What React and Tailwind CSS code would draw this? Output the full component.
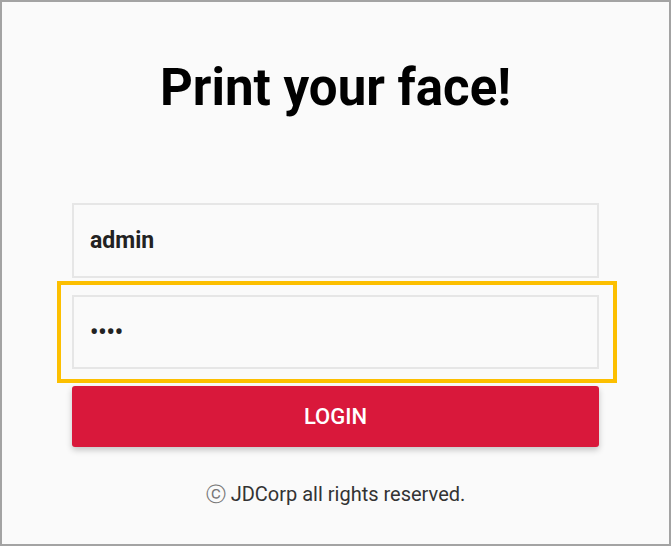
export default function App() {
  return (
    <div
      className="box-border h-[546px] w-[671px] border-2 border-[#a3a3a3] bg-[#fafafa]"
      style={{ fontFamily: "Roboto, 'Liberation Sans', sans-serif" }}
    >
      <h1 className="pt-[52px] text-center text-[51px] font-bold leading-[68px] text-black">
        Print your face!
      </h1>
      <div className="mx-[70px] mt-[81px] flex flex-col">
        <input
          type="text"
          defaultValue="admin"
          className="box-border h-[75px] w-full border-2 border-[#e6e6e6] bg-[#fafafa] px-[16px] text-[23px] font-bold text-[#222] outline-none"
        />
        <div className="-ml-[15px] -mr-[18px] mt-[3px] border-4 border-[#fcbf00] py-[10px] pl-[11px] pr-[14px]">
          <input
            type="password"
            defaultValue="1234"
            className="box-border h-[74px] w-full border-2 border-[#e6e6e6] bg-[#fafafa] px-[16px] text-[23px] font-bold text-[#222] outline-none"
          />
        </div>
        <button
          type="button"
          className="mt-[3px] h-[61px] w-full rounded-[3px] bg-[#d9183b] text-[22px] font-medium text-white shadow-[0_3px_6px_rgba(0,0,0,0.22)]"
        >
          LOGIN
        </button>
      </div>
      <p className="mt-[35px] text-center text-[20px] leading-[24px] text-[#333]">
        <span className="text-[#777]">ⓒ</span> JDCorp all rights reserved.
      </p>
    </div>
  );
}
